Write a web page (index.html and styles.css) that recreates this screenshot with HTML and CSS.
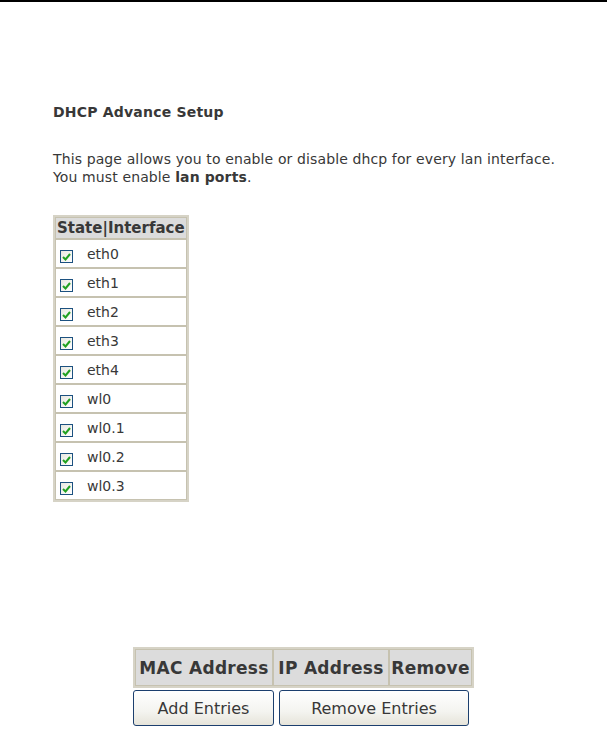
FILE: index.html
```html
<!DOCTYPE html>
<html lang="en">
<head>
  <meta charset="UTF-8">
  <title>DHCP Advance Setup</title>
  <link rel="stylesheet" href="styles.css">
</head>
<body>
  <div class="page">
    <h1 class="title">DHCP Advance Setup</h1>
    <p class="intro">This page allows you to enable or disable dhcp for every lan interface.<br>
      You must enable <b>lan ports</b>.</p>

    <table class="grid ports">
      <tr><th>State|Interface</th></tr>
      <tr><td><span class="check"><svg width="9" height="8" viewBox="0 0 9 8"><path d="M1 4 L3.5 6.5 L8 1" fill="none" stroke="#21a121" stroke-width="2"/></svg></span>eth0</td></tr>
      <tr><td><span class="check"><svg width="9" height="8" viewBox="0 0 9 8"><path d="M1 4 L3.5 6.5 L8 1" fill="none" stroke="#21a121" stroke-width="2"/></svg></span>eth1</td></tr>
      <tr><td><span class="check"><svg width="9" height="8" viewBox="0 0 9 8"><path d="M1 4 L3.5 6.5 L8 1" fill="none" stroke="#21a121" stroke-width="2"/></svg></span>eth2</td></tr>
      <tr><td><span class="check"><svg width="9" height="8" viewBox="0 0 9 8"><path d="M1 4 L3.5 6.5 L8 1" fill="none" stroke="#21a121" stroke-width="2"/></svg></span>eth3</td></tr>
      <tr><td><span class="check"><svg width="9" height="8" viewBox="0 0 9 8"><path d="M1 4 L3.5 6.5 L8 1" fill="none" stroke="#21a121" stroke-width="2"/></svg></span>eth4</td></tr>
      <tr><td><span class="check"><svg width="9" height="8" viewBox="0 0 9 8"><path d="M1 4 L3.5 6.5 L8 1" fill="none" stroke="#21a121" stroke-width="2"/></svg></span>wl0</td></tr>
      <tr><td><span class="check"><svg width="9" height="8" viewBox="0 0 9 8"><path d="M1 4 L3.5 6.5 L8 1" fill="none" stroke="#21a121" stroke-width="2"/></svg></span>wl0.1</td></tr>
      <tr><td><span class="check"><svg width="9" height="8" viewBox="0 0 9 8"><path d="M1 4 L3.5 6.5 L8 1" fill="none" stroke="#21a121" stroke-width="2"/></svg></span>wl0.2</td></tr>
      <tr><td><span class="check"><svg width="9" height="8" viewBox="0 0 9 8"><path d="M1 4 L3.5 6.5 L8 1" fill="none" stroke="#21a121" stroke-width="2"/></svg></span>wl0.3</td></tr>
    </table>

    <div class="entries">
      <table class="grid macs">
        <tr><th class="mac">MAC Address</th><th class="ip">IP Address</th><th class="rm">Remove</th></tr>
      </table>
      <div class="actions">
        <button class="btn add">Add Entries</button>
        <button class="btn remove">Remove Entries</button>
      </div>
    </div>
  </div>
</body>
</html>
```

FILE: styles.css
```css
body {
  margin: 0;
  border-top: 2px solid #000;
  background: #fff;
  color: #383838;
  font-family: 'DejaVu Sans', sans-serif;
  font-size: 14px;
}
.page {
  padding: 0 0 0 53px;
}
.title {
  margin: 0;
  padding-top: 101px;
  font-size: 14px;
  font-weight: bold;
  letter-spacing: 0.2px;
  line-height: 18px;
}
.intro {
  margin: 29px 0 0;
  line-height: 18px;
  letter-spacing: 0.12px;
}
.grid {
  border-collapse: separate;
  border-spacing: 0;
  border: 2px solid #d6d3c6;
  background: #fff;
}
.grid th {
  background: #dcdcdc;
  border: 1px solid #c6c2b0;
  font-size: 15px;
  font-weight: bold;
  color: #383838;
  padding: 0 1px;
  text-align: left;
}
.grid td {
  border: 1px solid #c6c2b0;
  height: 25px;
  padding: 2px 0 0 4px;
  font-size: 14px;
}
.ports {
  margin-top: 29px;
}
.ports th {
  height: 20px;
}
.check {
  display: inline-flex;
  align-items: center;
  justify-content: center;
  box-sizing: border-box;
  width: 13px;
  height: 13px;
  border: 1px solid #1c5180;
  background: linear-gradient(135deg, #e8e8e0, #fff);
  margin-right: 14px;
  vertical-align: -2px;
}
.entries {
  margin: 145px 0 0 80px;
  width: 341px;
}
.macs {
  width: 341px;
}
.macs th {
  height: 35px;
  text-align: center;
  font-size: 17px;
  letter-spacing: 0.3px;
}
.macs .mac {
  width: 134px;
}
.macs .ip {
  width: 112px;
}
.actions {
  display: flex;
  gap: 5px;
  margin-top: 2px;
}
.btn {
  height: 36px;
  border: 1px solid #1c3f6e;
  border-radius: 3px;
  background: linear-gradient(#ffffff, #f4f4f0 60%, #e6e4da);
  color: #383838;
  font-family: 'DejaVu Sans', sans-serif;
  font-size: 16px;
  padding: 0;
}
.add {
  width: 141px;
}
.remove {
  width: 190px;
}
```
